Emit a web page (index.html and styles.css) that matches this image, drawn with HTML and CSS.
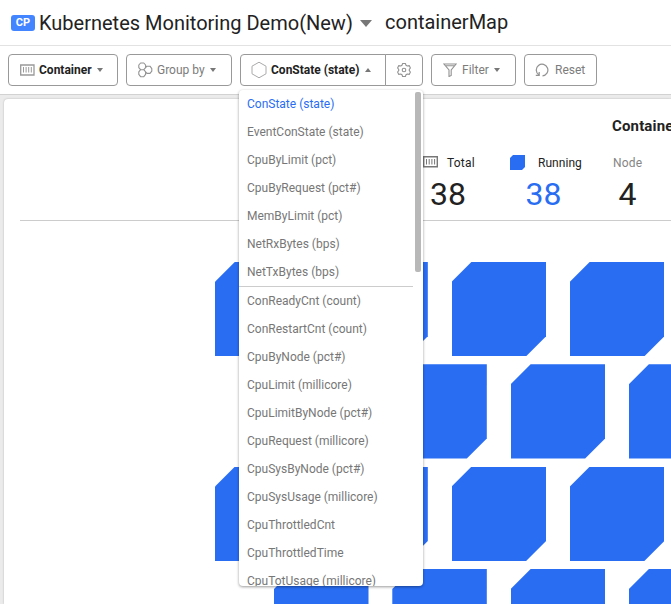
FILE: index.html
```html
<!DOCTYPE html>
<html lang="en">
<head>
<meta charset="utf-8">
<title>containerMap</title>
<link rel="stylesheet" href="styles.css">
</head>
<body>
<header class="header">
  <span class="badge">CP</span>
  <span class="project">Kubernetes Monitoring Demo(New)</span>
  <span class="project-arrow"></span>
  <span class="page-name">containerMap</span>
</header>
<nav class="toolbar">
  <button class="btn btn-container strong">
    <svg width="15" height="12" viewBox="0 0 15 12" fill="none" stroke="#999"><path d="M.7 1h13.300v10H.7z" stroke-width="1.300"/><path d="M3.500 3v5.500M6.100 3v5.500M8.700 3v5.500M11.300 3v5.500"/></svg>
    <span>Container</span><i class="caret"></i>
  </button>
  <button class="btn btn-group">
    <svg width="16" height="16" viewBox="0 0 16 16" fill="none" stroke="#929292" stroke-width="1.100" stroke-linejoin="round"><path d="M3.600 1h3.200l1.800 2v2.600L6.800 7.700H3.600L1.800 5.600V3zM3.600 7.700h3.200l1.800 2.100v2.600l-1.800 2.300H3.600l-1.800-2.300V9.800zM8.600 5.600l1.400-1.400h3l1.800 2.400v2.600L13 11.400h-3L8.600 9.800"/></svg>
    <span>Group by</span><i class="caret"></i>
  </button>
  <div class="metric">
    <button class="btn btn-metric strong">
      <svg width="16" height="18" viewBox="0 0 16 18" fill="none" stroke="#aaa"><path d="M8 1.200l7 4v7.600l-7 4-7-4V5.200z"/></svg>
      <span>ConState (state)</span><i class="caret up"></i>
    </button>
    <button class="btn btn-gear" aria-label="Settings">
      <svg width="14" height="16" viewBox="0 0 14 16" fill="none" stroke="#929292" stroke-width="1.100" stroke-linejoin="round"><path d="M5.600 1.500h2.800l.6 1.700 1.300.8 1.900-.4 1.200 2.400-1.100 1.300v1.400l1.100 1.300-1.200 2.400-1.900-.4-1.300.8-.6 1.700H5.600L5 12.800l-1.300-.8-1.900.4L.6 10l1.100-1.300V7.300L.6 6l1.200-2.400 1.900.4L5 3.200z"/><circle cx="7" cy="8" r="1.800"/></svg>
    </button>
    <div class="menu">
      <ul class="menu-list">
        <li class="selected">ConState (state)</li>
        <li>EventConState (state)</li>
        <li>CpuByLimit (pct)</li>
        <li>CpuByRequest (pct#)</li>
        <li>MemByLimit (pct)</li>
        <li>NetRxBytes (bps)</li>
        <li>NetTxBytes (bps)</li>
        <li class="separated">ConReadyCnt (count)</li>
        <li>ConRestartCnt (count)</li>
        <li>CpuByNode (pct#)</li>
        <li>CpuLimit (millicore)</li>
        <li>CpuLimitByNode (pct#)</li>
        <li>CpuRequest (millicore)</li>
        <li>CpuSysByNode (pct#)</li>
        <li>CpuSysUsage (millicore)</li>
        <li>CpuThrottledCnt</li>
        <li>CpuThrottledTime</li>
        <li>CpuTotUsage (millicore)</li>
      </ul>
      <span class="thumb"></span>
    </div>
  </div>
  <button class="btn btn-filter">
    <svg width="14" height="14" viewBox="0 0 14 14" fill="none" stroke="#929292" stroke-width="1.100"><path d="M.9 1h12.200L8.200 7v5.500L6 13.500V7zM2 2.700h10"/></svg>
    <span>Filter</span><i class="caret"></i>
  </button>
  <button class="btn btn-reset">
    <svg width="14" height="14" viewBox="0 0 14 14" fill="none" stroke="#929292" stroke-width="1.200"><path d="M3.800 11.800A5.800 5.800 0 1 1 7.500 12.800M4.200 9v3.300H.8"/></svg>
    <span>Reset</span>
  </button>
</nav>
<main class="panel">
  <section class="summary">
    <h2>Container Map</h2>
    <div class="stats">
      <div class="stat total">
        <div class="label"><svg width="15" height="12" viewBox="0 0 15 12" fill="none" stroke="#777"><path d="M.7.700h13.600v10.100H.7z" stroke-width="1.400"/><path d="M3.500 3v5.500M6.200 3v5.500M8.900 3v5.500M11.600 3v5.500"/></svg><span>Total</span></div>
        <div class="value">38</div>
      </div>
      <div class="stat running">
        <div class="label"><svg width="15" height="15" viewBox="0 0 15 15"><path d="M3 0h12v12l-3 3H0V3z" fill="#296df3"/></svg><span>Running</span></div>
        <div class="value">38</div>
      </div>
      <div class="stat node">
        <div class="label"><span>Node</span></div>
        <div class="value">4</div>
      </div>
    </div>
  </section>
  <section class="map">
    <div class="row"><i class="tile"></i><i class="tile"></i><i class="tile"></i><i class="tile"></i></div>
    <div class="row odd"><i class="tile"></i><i class="tile"></i><i class="tile"></i><i class="tile"></i></div>
    <div class="row"><i class="tile"></i><i class="tile"></i><i class="tile"></i><i class="tile"></i></div>
    <div class="row odd"><i class="tile"></i><i class="tile"></i><i class="tile"></i><i class="tile"></i></div>
  </section>
</main>
</body>
</html>
```
FILE: styles.css
```css
* { box-sizing: border-box; }
body {
  margin: 0;
  height: 604px;
  overflow: hidden;
  display: flex;
  flex-direction: column;
  background: #ebebeb;
  color: #222;
  font-family: Roboto, "Liberation Sans", sans-serif;
}
.header {
  flex: none;
  height: 46px;
  display: flex;
  align-items: center;
  padding-left: 11px;
  background: #fff;
  border-bottom: 1px solid #e2e2e2;
  font-size: 20px;
  white-space: nowrap;
}
.badge {
  width: 24px;
  height: 16px;
  margin-right: 4px;
  border-radius: 3px;
  background: #4285ff;
  color: #fff;
  font-size: 11px;
  font-weight: 700;
  line-height: 16px;
  text-align: center;
}
.project { width: 313px; }
.page-name { padding-bottom: 2px; }
.project-arrow {
  margin: 2px 13px 0 8px;
  border: 6px solid transparent;
  border-top: 7px solid #777;
  border-bottom: 0;
}
.toolbar {
  flex: none;
  height: 49px;
  display: flex;
  align-items: flex-start;
  gap: 8px;
  padding: 8px;
  background: #fff;
  border-bottom: 1px solid #d2d2d2;
}
.btn {
  height: 32px;
  display: flex;
  align-items: center;
  padding: 0 0 0 11px;
  border: 1px solid #999;
  border-radius: 4px;
  background: #fff;
  color: #7c7c7c;
  font: 12px Roboto, "Liberation Sans", sans-serif;
  white-space: nowrap;
}
.btn svg { flex: none; margin-right: 4px; }
.btn.strong { color: #222; font-weight: 700; }
.caret {
  margin-left: 5px;
  border: 3px solid transparent;
  border-top: 4px solid #777;
  border-bottom: 0;
}
.caret.up { border-top: 0; border-bottom: 4px solid #777; }
.btn-container { width: 110px; }
.btn-group { width: 106px; padding-left: 10px; }
.btn-filter { width: 85px; }
.btn-reset { width: 73px; }
.btn-filter svg, .btn-reset svg { margin-right: 5px; }
.btn-reset { padding-left: 10px; }
.btn-reset svg { margin-right: 6px; }
.metric { position: relative; display: flex; width: 183px; }
.btn-metric { width: 146px; padding-left: 10px; border-radius: 4px 0 0 4px; }
.btn-metric .caret { margin-left: 6px; }
.btn-gear { width: 38px; margin-left: -1px; border-radius: 0 4px 4px 0; }
.menu {
  position: absolute;
  z-index: 2;
  top: 36px;
  left: -1px;
  width: 184px;
  height: 496px;
  overflow: hidden;
  border-radius: 4px;
  background: #fff;
  box-shadow: 0 1px 3px rgba(0, 0, 0, 0.4);
}
.menu-list {
  width: 174px;
  margin: 0;
  padding: 0;
  list-style: none;
  color: #777;
  font-size: 12px;
  line-height: 28px;
}
.menu-list li { height: 28px; padding-left: 8px; white-space: nowrap; }
.menu-list .selected { color: #296df3; }
.menu-list .separated { height: 29px; border-top: 1px solid #ccc; }
.thumb {
  position: absolute;
  top: 2px;
  right: 2px;
  width: 6px;
  height: 180px;
  border-radius: 2px;
  background: #b8b8b8;
}
.panel {
  flex: 1;
  margin: 4px 0 0 4px;
  min-height: 0;
  overflow: hidden;
  border-radius: 4px 0 0 0;
  background: #fff;
  box-shadow: 0 0 2px rgba(0, 0, 0, 0.25);
}
.summary {
  height: 122px;
  margin-left: 16px;
  border-bottom: 1px solid #ccc;
}
.summary h2 {
  margin: 0 0 0 592px;
  padding-top: 17px;
  font-size: 15px;
  letter-spacing: 0.150px;
  line-height: 20px;
  white-space: nowrap;
}
.stats { display: flex; padding: 17px 0 0 403px; }
.label { display: flex; align-items: center; height: 18px; font-size: 12px; letter-spacing: 0.200px; }
.label span { padding-top: 1px; }
.value { font-size: 32px; line-height: 38px; margin-top: 4px; text-align: center; }
.total { width: 87px; }
.total .label { gap: 9px; }
.total .value { width: 50px; }
.running { width: 103px; }
.running .label { gap: 13px; letter-spacing: 0.050px; }
.running .value { width: 67px; color: #296df3; }
.node .label { color: #858585; }
.node .value { width: 29px; }
.map {
  display: flex;
  flex-direction: column;
  gap: 8px;
  padding: 40.800px 0 0 211px;
}
.row { display: flex; gap: 23.800px; }
.row.odd { margin-left: 59px; }
.tile {
  flex: none;
  width: 94.500px;
  height: 94.400px;
  background: #296df3;
  clip-path: polygon(20px 0, 100% 0, 100% calc(100% - 20px), calc(100% - 20px) 100%, 0 100%, 0 20px);
}
```
